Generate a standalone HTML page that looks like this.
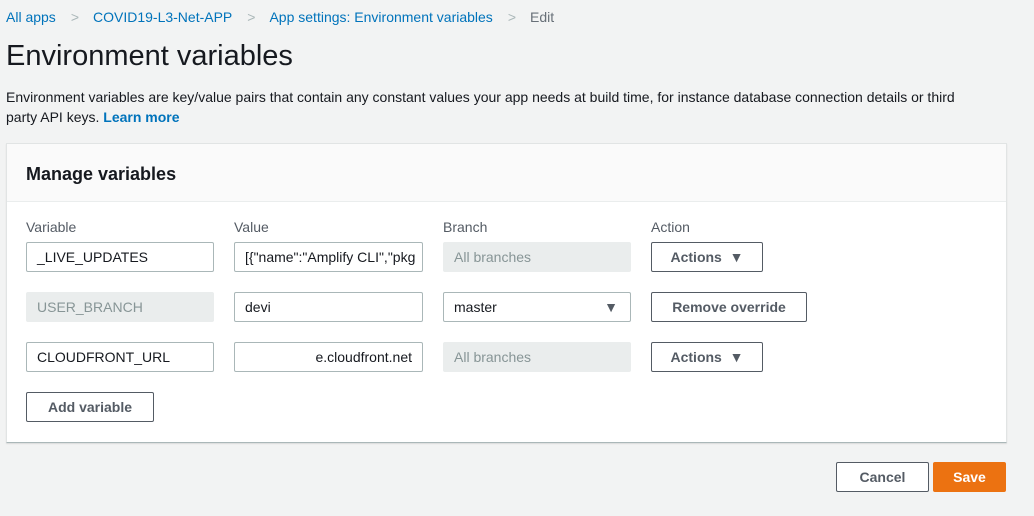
<!DOCTYPE html><html><head><style>
body{margin:0;background:#f2f3f3;font-family:"Liberation Sans",sans-serif;color:#16191f;width:1034px;height:516px;overflow:hidden;position:relative;font-size:14px}
.a{position:absolute}
.bc{top:9px;left:6px;font-size:14px;color:#0073bb;white-space:nowrap}
.bc .s{color:#aab7b8;margin:0 14px 0 15px}
.bc .e{color:#687078}
h1{position:absolute;margin:0;top:40px;left:6px;font-size:29px;font-weight:normal}
.d{top:87px;left:6px;width:978px;line-height:20px;color:#16191f}
.card{left:6px;top:143px;width:999px;height:298px;background:#fff;border:1px solid #e1e4e4;border-bottom:1px solid #aab7b8;box-shadow:0 1px 1px rgba(0,0,0,.1)}
.hd{height:57px;background:#fafafa;border-bottom:1px solid #eaeded}
.hd b{position:absolute;left:19px;top:20px;font-size:18px}
.lb{top:219px;color:#545b64}
.in{height:28px;border:1px solid #aab7b8;border-radius:2px;background:#fff;line-height:28px;padding-left:10px;box-sizing:content-box;white-space:nowrap;overflow:hidden}
.dis{background:#eaeded;border-color:#eaeded;color:#879596}
.btn{height:28px;border:1px solid #545b64;border-radius:2px;background:#fff;line-height:28px;text-align:center;font-weight:bold;color:#545b64;box-sizing:content-box}
</style></head><body>
<div class="a bc">All apps<span class="s">&gt;</span>COVID19-L3-Net-APP<span class="s">&gt;</span>App settings: Environment variables<span class="s">&gt;</span><span class="e">Edit</span></div>
<h1>Environment variables</h1>
<div class="a d">Environment variables are key/value pairs that contain any constant values your app needs at build time, for instance database connection details or third party API keys. <span style="color:#0073bb;font-weight:bold">Learn more</span></div>
<div class="a card"><div class="hd"><b>Manage variables</b></div></div>
<div class="a lb" style="left:26px">Variable</div>
<div class="a lb" style="left:234px">Value</div>
<div class="a lb" style="left:443px">Branch</div>
<div class="a lb" style="left:651px">Action</div>

<div class="a in" style="left:26px;top:242px;width:176px">_LIVE_UPDATES</div>
<div class="a in" style="left:234px;top:242px;width:177px">[{"name":"Amplify CLI","pkg</div>
<div class="a in dis" style="left:443px;top:242px;width:176px">All branches</div>
<div class="a btn" style="left:651px;top:242px;width:110px">Actions&nbsp; ▼</div>

<div class="a in dis" style="left:26px;top:292px;width:176px">USER_BRANCH</div>
<div class="a in" style="left:234px;top:292px;width:177px">devi</div>
<div class="a in" style="left:443px;top:292px;width:176px">master<span style="position:absolute;right:12px;color:#545b64">▼</span></div>
<div class="a btn" style="left:651px;top:292px;width:154px">Remove override</div>

<div class="a in" style="left:26px;top:342px;width:176px">CLOUDFRONT_URL</div>
<div class="a in" style="left:234px;top:342px;text-align:right;padding:0 10px 0 0;width:177px">e.cloudfront.net</div>
<div class="a in dis" style="left:443px;top:342px;width:176px">All branches</div>
<div class="a btn" style="left:651px;top:342px;width:110px">Actions&nbsp; ▼</div>

<div class="a btn" style="left:26px;top:392px;width:126px">Add variable</div>
<div class="a btn" style="left:836px;top:462px;width:91px">Cancel</div>
<div class="a btn" style="left:933px;top:462px;width:71px;background:#ec7211;border-color:#ec7211;color:#fff">Save</div>
</body></html>
